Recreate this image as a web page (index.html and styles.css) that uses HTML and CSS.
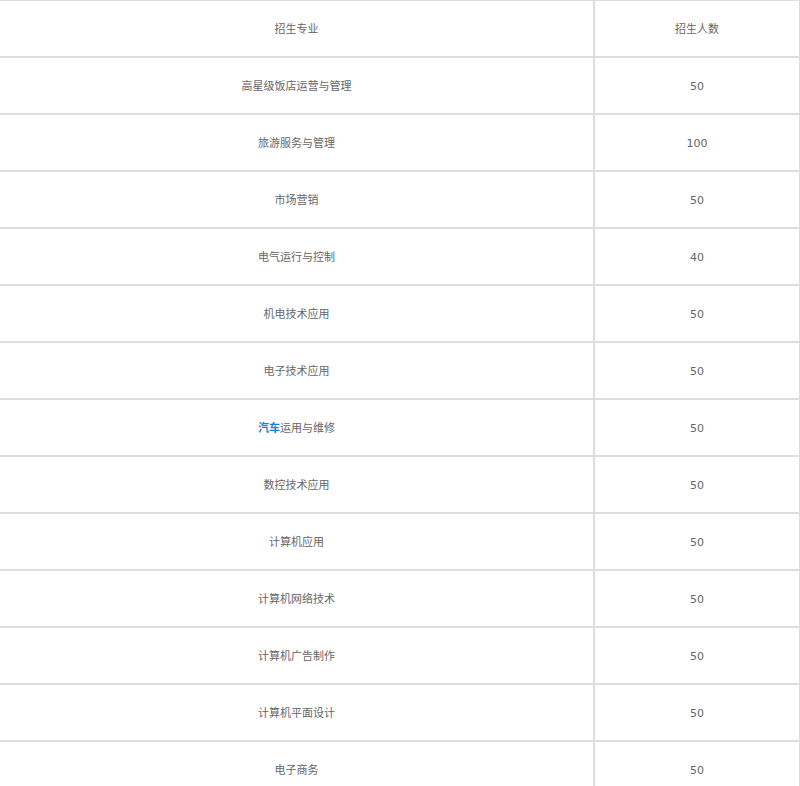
FILE: index.html
```html
<!DOCTYPE html>
<html lang="zh-CN">
<head>
<meta charset="utf-8">
<title>招生专业</title>
<link rel="stylesheet" href="styles.css">
</head>
<body>
<table class="majors">
  <tbody>
    <tr><td class="col-name">招生专业</td><td class="col-num">招生人数</td></tr>
    <tr><td class="col-name">高星级饭店运营与管理</td><td class="col-num">50</td></tr>
    <tr><td class="col-name">旅游服务与管理</td><td class="col-num">100</td></tr>
    <tr><td class="col-name">市场营销</td><td class="col-num">50</td></tr>
    <tr><td class="col-name">电气运行与控制</td><td class="col-num">40</td></tr>
    <tr><td class="col-name">机电技术应用</td><td class="col-num">50</td></tr>
    <tr><td class="col-name">电子技术应用</td><td class="col-num">50</td></tr>
    <tr><td class="col-name"><a class="kw" href="#">汽车</a>运用与维修</td><td class="col-num">50</td></tr>
    <tr><td class="col-name">数控技术应用</td><td class="col-num">50</td></tr>
    <tr><td class="col-name">计算机应用</td><td class="col-num">50</td></tr>
    <tr><td class="col-name">计算机网络技术</td><td class="col-num">50</td></tr>
    <tr><td class="col-name">计算机广告制作</td><td class="col-num">50</td></tr>
    <tr><td class="col-name">计算机平面设计</td><td class="col-num">50</td></tr>
    <tr><td class="col-name">电子商务</td><td class="col-num">50</td></tr>
  </tbody>
</table>
</body>
</html>
```

FILE: styles.css
```css
html, body {
  margin: 0;
  padding: 0;
  background: #ffffff;
}

body {
  font-family: "DejaVu Sans", "Noto Sans CJK SC", sans-serif;
  font-size: 11px;
  line-height: 15px;
  color: #666666;
}

.majors {
  width: 800px;
  border-collapse: separate;
  border-spacing: 0;
  table-layout: fixed;
}

.majors td {
  height: 54px;
  padding: 1px 0 0;
  text-align: center;
  vertical-align: middle;
  border: 1px solid #dddddd;
}

.majors .col-name {
  width: 593px;
  border-left: none;
}

.majors .col-num {
  width: 204px;
}

.kw {
  color: #1a7fd6;
  font-weight: bold;
  text-decoration: none;
}
```
